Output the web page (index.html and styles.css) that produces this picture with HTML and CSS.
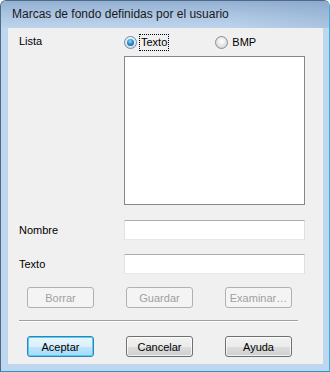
FILE: index.html
```html
<!DOCTYPE html>
<html>
<head>
<meta charset="utf-8">
<link rel="stylesheet" href="styles.css">
</head>
<body>
<div class="window">
  <div class="titlebar">Marcas de fondo definidas por el usuario</div>
  <div class="client">
    <div class="row row-top">
      <span class="label">Lista</span>
      <div class="radios">
        <span class="radio"><span class="dot checked"></span><span class="rtext focus">Texto</span></span>
        <span class="radio radio-bmp"><span class="dot"></span><span class="rtext">BMP</span></span>
      </div>
    </div>
    <div class="row">
      <span class="label"></span>
      <div class="listbox"></div>
    </div>
    <div class="row row-field first-field">
      <span class="label">Nombre</span>
      <div class="textbox"></div>
    </div>
    <div class="row row-field second-field">
      <span class="label">Texto</span>
      <div class="textbox"></div>
    </div>
    <div class="buttons buttons-top">
      <button class="btn disabled">Borrar</button>
      <button class="btn disabled">Guardar</button>
      <button class="btn disabled">Examinar…</button>
    </div>
    <div class="separator"></div>
    <div class="buttons buttons-bottom">
      <button class="btn default">Aceptar</button>
      <button class="btn">Cancelar</button>
      <button class="btn">Ayuda</button>
    </div>
  </div>
</div>
</body>
</html>
```

FILE: styles.css
```css
html, body {
  margin: 0;
  padding: 0;
  background: #ffffff;
}
.window {
  width: 330px;
  height: 372px;
  box-sizing: border-box;
  border: 1px solid #4d6a88;
  border-right-color: #2fb6dd;
  border-bottom-color: #1f9cc4;
  border-radius: 6px 6px 0 0;
  background: #bed6ee;
  display: flex;
  flex-direction: column;
  font-family: "Liberation Sans", Arial, sans-serif;
  font-size: 11px;
  color: #000;
  overflow: hidden;
}
.titlebar {
  height: 27px;
  box-sizing: border-box;
  padding: 6px 0 0 11px;
  font-size: 12px;
  color: #1a1a1a;
  background: linear-gradient(90deg, rgba(255,255,255,0) 70%, rgba(120,150,190,0.25) 100%),
              linear-gradient(180deg, #93b0d2 0%, #a9c3e0 45%, #bdd4ec 100%);
  white-space: nowrap;
}
.client {
  margin: 0 6px 0 7px;
  height: 336px;
  background: #f0f0f0;
  box-sizing: border-box;
  padding: 0 0 0 11px;
  display: flex;
  flex-direction: column;
}
.row {
  display: flex;
  align-items: flex-start;
}
.label {
  width: 105px;
  flex: none;
}
.row-top {
  margin-top: 6px;
  height: 16px;
  align-items: center;
}
.row-top .label {
  position: relative;
  top: -1px;
}
.radios {
  display: flex;
  align-items: center;
}
.radio {
  display: flex;
  align-items: center;
}
.radio-bmp {
  margin-left: 46px;
}
.dot {
  width: 13px;
  height: 13px;
  box-sizing: border-box;
  border-radius: 50%;
  border: 1px solid #8a8d91;
  background: radial-gradient(circle at 50% 40%, #ffffff 0%, #e9e9e9 45%, #c9c9c9 100%);
  flex: none;
  position: relative;
}
.dot.checked {
  border-color: #6f8aa6;
  background: radial-gradient(circle at 50% 40%, #ffffff 0%, #e2e8ee 60%, #b7c4d2 100%);
}
.dot.checked::after {
  content: "";
  position: absolute;
  left: 2px;
  top: 2px;
  width: 7px;
  height: 7px;
  border-radius: 50%;
  background: radial-gradient(circle at 45% 35%, #8fd8ff 0%, #2a8fd0 45%, #0e4a82 100%);
}
.rtext {
  margin-left: 2px;
  padding: 1px;
  border: 1px solid transparent;
  line-height: 13px;
}
.rtext.focus {
  border: 1px dotted #000;
}
.listbox {
  margin-top: 6px;
  width: 181px;
  height: 149px;
  box-sizing: border-box;
  border: 1px solid #828790;
  background: #fff;
}
.row-field {
  align-items: center;
}
.first-field {
  margin-top: 15px;
}
.second-field {
  margin-top: 14px;
}
.textbox {
  width: 181px;
  height: 20px;
  box-sizing: border-box;
  border: 1px solid;
  border-color: #abadb3 #dbdfe6 #e3e9ef #e2e3ea;
  background: #fff;
}
.buttons {
  display: flex;
  gap: 32px;
  padding-left: 8px;
}
.buttons-top {
  margin-top: 13px;
}
.buttons-bottom {
  margin-top: 14px;
}
.btn {
  width: 67px;
  height: 21px;
  box-sizing: border-box;
  border: 1px solid #707070;
  border-radius: 3px;
  font-family: "Liberation Sans", Arial, sans-serif;
  font-size: 11px;
  color: #000;
  padding: 0;
  background: linear-gradient(180deg, #f2f2f2 0%, #ebebeb 50%, #dddddd 51%, #cfcfcf 100%);
  box-shadow: inset 0 0 0 1px rgba(255,255,255,0.7);
}
.btn.disabled {
  border-color: #adb2b5;
  background: #f4f4f4;
  color: #a0a0a0;
  box-shadow: none;
}
.btn.default {
  border-color: #3c7fb1;
  box-shadow: inset 0 0 0 1px #48d2fc;
  background: linear-gradient(180deg, #eaf6fd 0%, #d9f0fc 50%, #bee6fd 51%, #a7d9f5 100%);
}
.separator {
  margin-top: 12px;
  width: 279px;
  height: 1px;
  background: #a0a0a0;
  border-bottom: 1px solid #ffffff;
}
```
